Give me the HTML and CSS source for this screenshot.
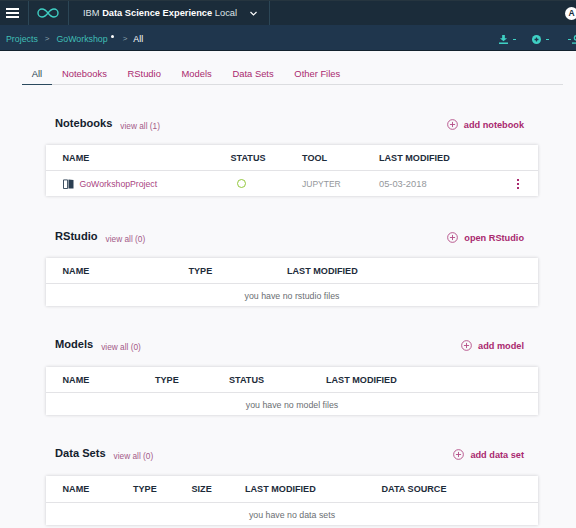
FILE: index.html
```html
<!DOCTYPE html>
<html lang="en">
<head>
<meta charset="utf-8">
<title>IBM Data Science Experience Local</title>
<link rel="stylesheet" href="styles.css">
</head>
<body>
<header class="topbar">
  <div class="cell burger-cell"><span class="burger"><i></i><i></i><i></i></span></div>
  <div class="cell logo-cell">
    <svg width="24" height="10" viewBox="0 0 24 10" fill="none" stroke="#3fd0c4" stroke-width="1.400"><path d="M12 5C9.700 2 8 1 6 1a4 4 0 0 0 0 8c2 0 3.700-1 6-4s4-4 6-4a4 4 0 0 1 0 8c-2 0-3.700-1-6-4z"/></svg>
  </div>
  <div class="cell brand-cell">
    <span class="brand">IBM <b>Data Science Experience</b> Local</span>
    <svg class="chev" width="7" height="5" viewBox="0 0 7 5" fill="none" stroke="#fff" stroke-width="1.200"><path d="M.5 1l3 3 3-3"/></svg>
  </div>
  <div class="cell spacer-cell"></div>
  <div class="avatar">A</div>
</header>
<nav class="crumbs">
  <a class="crumb">Projects</a><span class="sep">&gt;</span>
  <a class="crumb">GoWorkshop</a><span class="dot"></span><span class="sep sep2">&gt;</span>
  <span class="current">All</span>
  <div class="actions">
    <span class="action act-dl"><svg width="9" height="9" viewBox="0 0 10 10" fill="#3fd0c4"><path d="M3.500 0h3v3.500H9L5 7 1 3.500h2.500z"/><rect y="8.300" width="10" height="1.700"/></svg><em></em></span>
    <span class="action act-add"><svg width="9" height="9" viewBox="0 0 10 10"><circle cx="5" cy="5" r="5" fill="#3fd0c4"/><path d="M5 2.800v4.400M2.800 5h4.400" stroke="#1f364d" stroke-width="1.400"/></svg><em></em></span>
    <span class="action act-user"><em></em><svg width="9" height="9" viewBox="0 0 10 10" fill="none" stroke="#3fd0c4" stroke-width="1.500"><circle cx="5" cy="3.200" r="2.400"/><path d="M0 9h10"/></svg></span>
  </div>
</nav>
<main class="content">
  <div class="tabs">
    <a class="tab active">All</a><a class="tab">Notebooks</a><a class="tab">RStudio</a><a class="tab">Models</a><a class="tab">Data Sets</a><a class="tab">Other Files</a>
  </div>

  <section class="sec sec-notebooks">
    <div class="sec-head">
      <h2>Notebooks</h2><a class="viewall">view all (1)</a>
      <a class="add"><svg class="plus" viewBox="0 0 12 12"><circle cx="6" cy="6" r="5.300"/><path d="M6 3.200v5.600M3.200 6h5.600"/></svg>add notebook</a>
    </div>
    <div class="card">
      <div class="row hdr nb"><span>NAME</span><span>STATUS</span><span>TOOL</span><span>LAST MODIFIED</span></div>
      <div class="row body nb">
        <span class="nb-name"><svg width="11" height="10" viewBox="0 0 12 11"><path d="M.5 1h4.500v9.500H.5z" fill="none" stroke="#2b3f52"/><path d="M6 .5l5.500.5v9.500L6 10.500z" fill="#2b3f52"/></svg><a>GoWorkshopProject</a></span>
        <span><i class="status"></i></span>
        <span class="muted tool">JUPYTER</span>
        <span class="muted date">05-03-2018</span>
        <span class="kebab"><i></i><i></i><i></i></span>
      </div>
    </div>
  </section>

  <section class="sec sec-rstudio">
    <div class="sec-head">
      <h2>RStudio</h2><a class="viewall">view all (0)</a>
      <a class="add"><svg class="plus" viewBox="0 0 12 12"><circle cx="6" cy="6" r="5.300"/><path d="M6 3.200v5.600M3.200 6h5.600"/></svg>open RStudio</a>
    </div>
    <div class="card">
      <div class="row hdr rs"><span>NAME</span><span>TYPE</span><span>LAST MODIFIED</span></div>
      <div class="empty">you have no rstudio files</div>
    </div>
  </section>

  <section class="sec sec-models">
    <div class="sec-head">
      <h2>Models</h2><a class="viewall">view all (0)</a>
      <a class="add"><svg class="plus" viewBox="0 0 12 12"><circle cx="6" cy="6" r="5.300"/><path d="M6 3.200v5.600M3.200 6h5.600"/></svg>add model</a>
    </div>
    <div class="card">
      <div class="row hdr md"><span>NAME</span><span>TYPE</span><span>STATUS</span><span>LAST MODIFIED</span></div>
      <div class="empty">you have no model files</div>
    </div>
  </section>

  <section class="sec sec-data">
    <div class="sec-head">
      <h2>Data Sets</h2><a class="viewall">view all (0)</a>
      <a class="add"><svg class="plus" viewBox="0 0 12 12"><circle cx="6" cy="6" r="5.300"/><path d="M6 3.200v5.600M3.200 6h5.600"/></svg>add data set</a>
    </div>
    <div class="card">
      <div class="row hdr ds"><span>NAME</span><span>TYPE</span><span>SIZE</span><span>LAST MODIFIED</span><span>DATA SOURCE</span></div>
      <div class="empty">you have no data sets</div>
    </div>
  </section>
</main>
</body>
</html>
```
FILE: styles.css
```css
* { box-sizing: border-box; }
html, body { margin: 0; padding: 0; }
body {
  width: 576px; height: 528px; overflow: hidden;
  background: #f9f9fb;
  font-family: "Liberation Sans", Arial, sans-serif;
  color: #1d2b3a;
}
.topbar {
  height: 25px; background: #1b2c3a; display: flex; align-items: stretch;
  border-top: 1px solid #26353f; position: relative;
}
.cell { display: flex; align-items: center; border-right: 1px solid #2c4656; }
.burger-cell { width: 29px; justify-content: center; padding-right: 4px; }
.burger { display: flex; flex-direction: column; gap: 2px; width: 13px; }
.burger i { display: block; height: 2px; background: #fff; }
.logo-cell { width: 40px; justify-content: center; padding-right: 2px; }
.brand-cell { width: 201px; padding-left: 14px; font-size: 9.300px; color: #dfe5e8; position: relative; }
.brand b { color: #fff; }
.chev { position: absolute; left: 181px; top: 10px; }
.spacer-cell { border: none; flex: 1; }
.avatar {
  position: absolute; right: -2px; top: 6px; width: 13px; height: 13px; border-radius: 50%;
  background: #fff; color: #1b2c3a; font-size: 8.500px; font-weight: bold; text-align: center; line-height: 13px;
}
.crumbs {
  height: 26px; background: #1f364d; display: flex; align-items: center;
  padding: 2px 0 0 6px; font-size: 8.800px; border-bottom: 1px solid #13222e; position: relative;
}
.crumb { color: #3fbfb5; }
.sep { color: #8fa3ad; margin: 0 7px 0 7px; font-size: 8px; }
.sep2 { margin-left: 9px; margin-right: 6px; }
.dot { width: 3px; height: 3px; border-radius: 50%; background: #fff; margin: -5px 0 0 3px; }
.current { color: #fff; }
.actions { position: absolute; left: 499px; top: 9px; width: 77px; height: 12px; }
.action { position: absolute; top: 1px; display: flex; align-items: center; gap: 5px; }
.action em { width: 3px; height: 1px; background: #3fd0c4; display: block; }
.act-dl { left: 0; }
.act-add { left: 33px; }
.act-user { left: 69px; gap: 1px; }
.tabs {
  display: flex; margin: 0 0 0 22px; width: 541px; height: 34px;
  border-bottom: 1px solid #dcdde0;
}
.tab { font-size: 9.400px; color: #a9296f; padding: 17px 0 0; margin-right: 20.700px; height: 34px; }
.tab.active {
  color: #2b3f52; width: 30px; margin-right: 10px; text-align: center;
  border-bottom: 1px solid #2b4a5e;
}
.sec { margin: 0 38px 0 46px; }
.sec-head { display: flex; align-items: center; height: 20px; }
h2 { margin: 0 0 0 9px; font-size: 11.100px; font-weight: bold; color: #14212d; }
.viewall { font-size: 8.300px; color: #a45a88; margin: 5px 0 0 8px; }
.add {
  margin: 3px 14px 0 auto; display: flex; align-items: center;
  font-size: 9.200px; font-weight: bold; color: #a9296f;
}
.plus { width: 11px; height: 11px; margin-right: 6px; fill: none; stroke: #b34d87; stroke-width: 1; }
.card { background: #fff; box-shadow: 0 0 3px rgba(40, 40, 50, .22); }
.row { display: grid; align-items: center; padding-left: 16.500px; font-size: 9.100px; }
.hdr { height: 26px; font-weight: bold; color: #1d2b3a; border-bottom: 1px solid #e3e3e6; }
.body { height: 25px; color: #8b8f93; }
.nb { grid-template-columns: 168px 71.500px 77px 1fr 28px; }
.rs { grid-template-columns: 126px 98.500px 1fr; }
.md { grid-template-columns: 92.500px 74px 97px 1fr; }
.ds { grid-template-columns: 70.500px 58.500px 53.500px 136.500px 1fr; }
.nb-name { display: flex; align-items: center; gap: 6px; font-size: 8.700px; }
.nb-name a { color: #a9447f; }
.muted { color: #94979b; }
.tool { font-size: 8.500px; }
.date { font-size: 9.300px; }
.status { display: block; width: 9px; height: 9px; border: 1.500px solid #93c83c; border-radius: 50%; margin-left: 6.500px; }
.kebab { display: flex; flex-direction: column; gap: 2px; align-items: center; width: 2px; margin-left: 7px; }
.kebab i { display: block; width: 2px; height: 2px; background: #a9296f; }
.empty { height: 22px; text-align: center; font-size: 8.800px; color: #6a6e72; line-height: 25px; }
.sec-notebooks { margin-top: 28px; }
.sec-notebooks .sec-head { margin-bottom: 12px; }
.sec-rstudio { margin-top: 30px; }
.sec-rstudio .sec-head { margin-bottom: 12px; }
.sec-models { margin-top: 28px; }
.sec-models .sec-head { margin-bottom: 13px; }
.sec-data { margin-top: 28px; }
.sec-data .sec-head { margin-bottom: 13px; }
.sec-data .hdr { height: 27px; }
```
